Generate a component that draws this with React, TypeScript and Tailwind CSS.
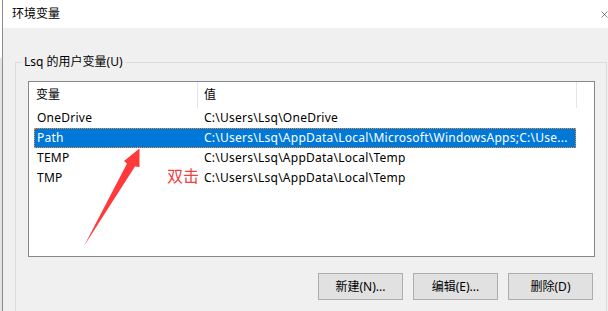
import { X } from "lucide-react";

const rows = [
  { name: "OneDrive", value: "C:\\Users\\Lsq\\OneDrive" },
  { name: "Path", value: "C:\\Users\\Lsq\\AppData\\Local\\Microsoft\\WindowsApps;C:\\Use...", selected: true },
  { name: "TEMP", value: "C:\\Users\\Lsq\\AppData\\Local\\Temp" },
  { name: "TMP", value: "C:\\Users\\Lsq\\AppData\\Local\\Temp" },
];

const buttons = ["新建(N)...", "编辑(E)...", "删除(D)"];

export default function App() {
  return (
    <div className="relative flex h-[311px] w-[608px] overflow-hidden bg-[#f0f0f0] font-['Noto_Sans','Noto_Sans_CJK_SC',sans-serif] text-[12px] leading-[16px] text-black">
      {/* bit of the window behind */}
      <div className="flex w-[2px] shrink-0 flex-col">
        <div className="h-[58px] bg-white" />
        <div className="flex-1 bg-[#e4e4e4]" />
      </div>

      <div className="flex min-w-0 flex-1 flex-col border-l border-[#8c8c8c]">
        <div className="flex h-[28px] shrink-0 items-center bg-white pl-[9px]">
          <span className="text-[12px]">环境变量</span>
          <X size={11} strokeWidth={1.2} className="ml-auto mr-[-2px] text-[#222]" />
        </div>

        <div className="pl-[12px] pt-[26px]">
          <fieldset className="w-[592px] border border-[#dcdcdc] pb-[30px] pl-[12px] pr-[11px] pt-[11px]">
            <legend className="-ml-[6px] px-[2px] leading-[16px]">Lsq 的用户变量(U)</legend>

            <div className="h-[176px] w-[567px] border border-[#828790] bg-white">
              <div className="flex h-[26px]">
                <div className="flex w-[169px] items-center border-r border-[#e5e5e5] pl-[7px]">变量</div>
                <div className="flex w-[379px] items-center border-r border-[#e5e5e5] pl-[6px]">值</div>
              </div>
              <div className="ml-[5px] w-[542px] tracking-[0.25px]">
                {rows.map((r) => (
                  <div
                    key={r.name}
                    className={
                      r.selected
                        ? "flex h-[20px] items-center border border-dotted border-[#ff8a1f] bg-[#0078d7] text-white"
                        : "flex h-[20px] items-center border border-transparent"
                    }
                  >
                    <div className="w-[163px] shrink-0 pl-[2px]">{r.name}</div>
                    <div className="min-w-0 flex-1 truncate pl-[6px]">{r.value}</div>
                  </div>
                ))}
              </div>
            </div>

            <div className="mr-[2px] mt-[16px] flex justify-end gap-[10px]">
              {buttons.map((b) => (
                <button
                  key={b}
                  className="h-[27px] w-[85px] border border-[#adadad] bg-[#e1e1e1] text-[12px]"
                >
                  {b}
                </button>
              ))}
            </div>
          </fieldset>
        </div>
      </div>

      {/* annotation overlay */}
      <svg className="pointer-events-none absolute left-0 top-0" width="608" height="311">
        <polygon
          points="139.5,148.5 139.5,167 135,166.5 84,246 127,163.5 124,161"
          fill="#fe3a3a"
        />
      </svg>
      <span className="absolute left-[167px] top-[166px] text-[16px] leading-[20px] text-[#f2403f]">双击</span>
    </div>
  );
}
